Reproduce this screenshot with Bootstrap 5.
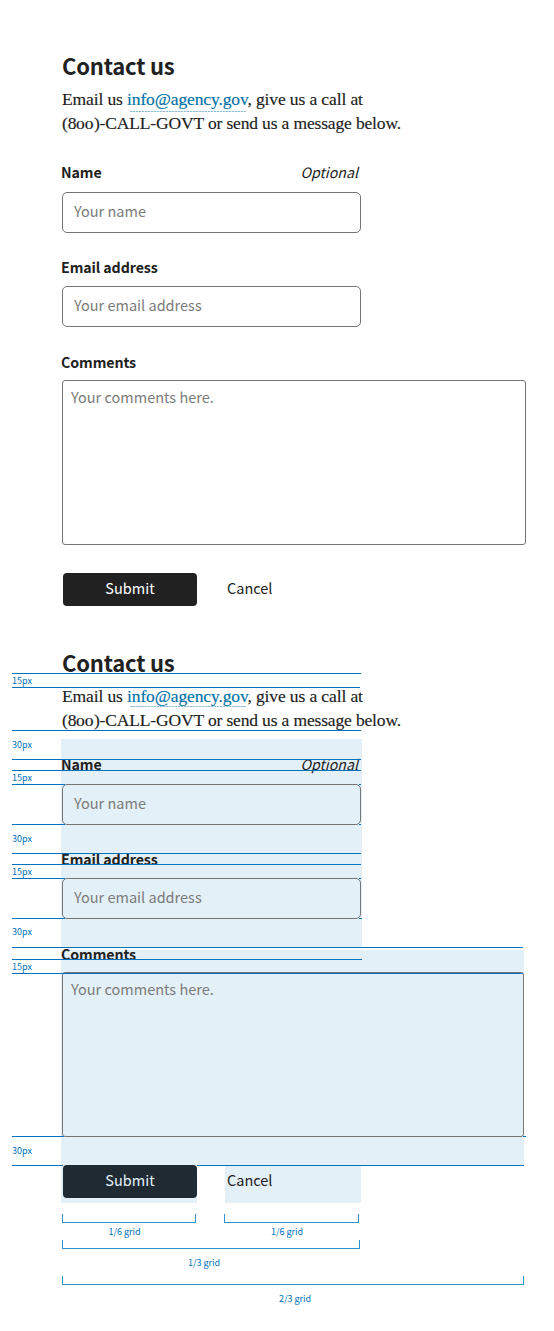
<!DOCTYPE html>
<html lang="en">
<head>
<meta charset="utf-8">
<meta name="viewport" content="width=device-width, initial-scale=1">
<title>Contact us</title>
<link href="https://cdn.jsdelivr.net/npm/bootstrap@5.3.0/dist/css/bootstrap.min.css" rel="stylesheet">
<style>
:root{--ink:#212121;--rule:#0071bc;--line:#757575}
body{font-family:"Noto Sans CJK SC","Noto Sans",sans-serif;color:var(--ink);background:#fff;font-size:14.5px;line-height:24px;overflow-x:hidden}
.demo{padding-left:61px}
.demo-title{font-size:22px;line-height:30px;font-weight:700;margin:0 0 7px 1px;letter-spacing:-.2px}
.intro{font-family:"Liberation Serif",serif;font-size:17.5px;line-height:24px;height:48px;margin:0 0 0 1px;white-space:nowrap;-webkit-text-stroke:.15px}
.intro a{color:#0071a6;text-decoration:none;background:repeating-linear-gradient(90deg,#8fbdd0 0 2px,#d5e6ed 2px 3px) 3px 100%/calc(100% - 4px) 1px no-repeat;padding-bottom:3px}
.l1{letter-spacing:-.12px}
.l2{letter-spacing:-.15px}
.osf{display:inline-block;font-size:13px;line-height:13px;letter-spacing:0;width:17.6px;transform:scaleX(1.35);transform-origin:0 0}
.fields{width:301px;height:208px;padding-top:13px}
.lab{font-weight:700;font-size:14.2px;letter-spacing:-.08px;line-height:24px;height:24px;margin:0;display:block}
.opt{font-style:italic;font-size:14.2px;margin-right:4px}
.form-control{border:1px solid var(--line);border-radius:5px;background:transparent;color:var(--ink);font-size:14.5px;line-height:24px;margin-left:1px}
.form-control::placeholder{color:#7b7b7b;opacity:1}
input.form-control{width:299px;height:41px;padding:5px 11px 10px;margin-top:8px}
.second{margin-top:22px}
.second input.form-control{margin-top:7px}
.comments{height:215px;margin-top:3px;width:464px}
.comments .lab{line-height:8px;height:8px}
textarea.form-control{width:464px;height:165px;resize:none;padding:4px 8px;border-radius:3px;margin-top:14px}
.actions{height:38px}
.cell{width:136px}
.cell+.cell{margin-left:28px}
.btn{height:33px;font-size:14.5px;line-height:24px;padding:3px 0 6px;border:0;border-radius:4px}
.btn-send,.btn-send:hover{background:var(--ink);color:#fff;width:134px;margin-left:2px}
.btn-drop{color:var(--ink);margin-left:2px}
.spec .band{background:#e4f0f8}
.spec .comments{width:463px}
.spec textarea.form-control{width:462px}
.spec .btn-send{background:#1f2a32;color:#e4f0f8}
.spec .intro{margin-bottom:7px}
.spec .intro a{padding-bottom:1px}
.redlines{left:0;top:0;width:554px;height:1210px;pointer-events:none}
.redlines text,.cap{font-size:9px;fill:var(--rule);color:var(--rule)}
.cap{line-height:18px;height:17px;text-align:center}
.brk{height:9px;border:1px solid #3391cc;border-top:0}
</style>
</head>
<body>
<main class="position-relative">
<section class="demo" style="padding-top:50px">
  <h1 class="demo-title">Contact us</h1>
  <p class="intro" style="margin-bottom:12px"><span class="l1">Email us <a href="#">info@agency.gov</a>, give us a call at</span><br><span class="l2">(8<span class="osf">00</span>)-CALL-GOVT or send us a message below.</span></p>
  <form>
    <div class="fields">
      <div class="d-flex justify-content-between"><label class="lab" for="n1">Name</label><span class="opt">Optional</span></div>
      <input class="form-control" id="n1" placeholder="Your name">
      <div class="second"><label class="lab" for="e1">Email address</label>
      <input class="form-control" id="e1" placeholder="Your email address"></div>
    </div>
    <div class="comments"><label class="lab" for="c1">Comments</label>
      <textarea class="form-control" id="c1" placeholder="Your comments here."></textarea></div>
    <div class="actions d-flex">
      <div class="cell"><button type="button" class="btn btn-send">Submit</button></div>
      <div class="cell"><button type="button" class="btn btn-drop">Cancel</button></div>
    </div>
  </form>
</section>

<section class="demo spec" style="padding-top:36px">
  <h2 class="demo-title">Contact us</h2>
  <p class="intro"><span class="l1">Email us <a href="#">info@agency.gov</a>, give us a call at</span><br><span class="l2">(8<span class="osf">00</span>)-CALL-GOVT or send us a message below.</span></p>
  <form>
    <div class="fields band">
      <div class="d-flex justify-content-between"><label class="lab" for="n2">Name</label><span class="opt">Optional</span></div>
      <input class="form-control" id="n2" placeholder="Your name">
      <div class="second"><label class="lab" for="e2">Email address</label>
      <input class="form-control" id="e2" placeholder="Your email address"></div>
    </div>
    <div class="comments band"><label class="lab" for="c2">Comments</label>
      <textarea class="form-control" id="c2" placeholder="Your comments here."></textarea></div>
    <div class="actions d-flex">
      <div class="cell band"><button type="button" class="btn btn-send">Submit</button></div>
      <div class="cell band"><button type="button" class="btn btn-drop">Cancel</button></div>
    </div>
  </form>
  <div class="d-flex" style="padding:11px 0 0 1px">
    <div style="width:134px"><div class="brk"></div><div class="cap" style="margin-left:-9px">1/6 grid</div></div>
    <div style="width:135px;margin-left:28px"><div class="brk"></div><div class="cap" style="margin-left:-9px">1/6 grid</div></div>
  </div>
  <div style="width:298px;margin-left:1px"><div class="brk"></div><div class="cap" style="margin:5px 0 0 -14px">1/3 grid</div></div>
  <div style="width:462px;margin:5px 0 0 1px"><div class="brk"></div><div class="cap" style="margin:5px 0 0 4px">2/3 grid</div></div>
</section>

<svg class="redlines position-absolute" viewBox="0 0 554 1210">
  <path stroke="#0071bc" fill="none" d="M12 673.5H361M12 687.5H360M12 730.5H361M12 759.5H361M12 770.5H361M12 784.5H65M359 784.5h2M12 824.5H65M359 824.5h2M12 853.5H361M12 864.5H361M12 878.5H65M359 878.5h2M12 918.5H65M359 918.5h3M12 947.5H523M12 959.5H362M12 973.5H523M12 1136.5H64M523 1136.5h3M12 1165.5H63M197 1165.5H524"/>
  <g><text x="12" y="684">15px</text><text x="12" y="748">30px</text><text x="12" y="781">15px</text><text x="12" y="842">30px</text><text x="12" y="875">15px</text><text x="12" y="935">30px</text><text x="12" y="970">15px</text><text x="12" y="1154">30px</text></g>
</svg>
</main>
<script src="https://cdn.jsdelivr.net/npm/bootstrap@5.3.0/dist/js/bootstrap.bundle.min.js"></script>
</body>
</html>
